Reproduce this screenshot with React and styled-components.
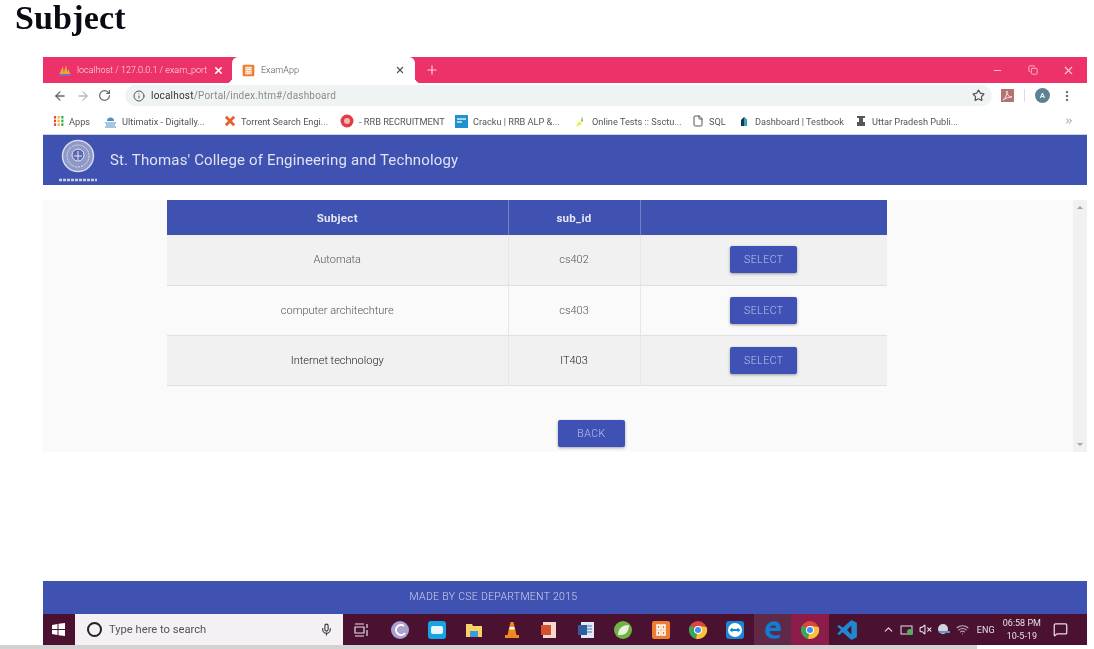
import React from 'react'
import styled, { createGlobalStyle } from 'styled-components'
import {
  ArrowLeft, ArrowRight, RotateCw, Info, Star, MoreVertical, X, Plus, Minus, Copy, File,
  Mic, ChevronUp, VolumeX, Wifi, MessageSquare, ChevronsRight,
} from 'lucide-react'

const subjects = [
  { name: 'Automata', id: 'cs402', dark: false },
  { name: 'computer architechture', id: 'cs403', dark: false },
  { name: 'Internet technology', id: 'IT403', dark: true },
]

const ChromeLogo = () => (
  <svg width="20" height="20" viewBox="0 0 20 20">
    <circle cx="10" cy="10" r="9" fill="#d9483b" />
    <path d="M10 10 L2.2 5.5 A9 9 0 0 0 8 18.8 Z" fill="#3aa757" />
    <path d="M10 10 L8 18.8 A9 9 0 0 0 18.6 7 L10 6 Z" fill="#f5c33b" />
    <circle cx="10" cy="10" r="4" fill="#fff" />
    <circle cx="10" cy="10" r="3" fill="#4a8af4" />
  </svg>
)

const XamppLogo = ({ size = 20 }) => (
  <svg width={size} height={size} viewBox="0 0 20 20">
    <rect x="1" y="1" width="18" height="18" rx="2" fill="#ee7d31" />
    <path d="M6 5h3v4H6zM11 5h3v4h-3zM6 11h3v4H6zM11 11h3v4h-3z" fill="none" stroke="#fff" strokeWidth="1.6" />
  </svg>
)

const taskIcons = [
  <svg width="20" height="20" viewBox="0 0 20 20" key="torrent">
    <circle cx="10" cy="10" r="9" fill="#a9a1cf" />
    <path d="M14 6a5 5 0 1 0 1 7" fill="none" stroke="#fff" strokeWidth="2" />
  </svg>,
  <svg width="20" height="20" viewBox="0 0 20 20" key="zoom">
    <rect x="1" y="1" width="18" height="18" rx="3" fill="#17a4e4" />
    <rect x="4" y="6" width="12" height="8" rx="2" fill="#eaf6fd" />
  </svg>,
  <svg width="20" height="20" viewBox="0 0 20 20" key="folder">
    <path d="M2 4h6l1 2h9v11H2z" fill="#f6d268" />
    <rect x="6" y="11" width="8" height="6" fill="#3f9bd8" />
  </svg>,
  <svg width="20" height="20" viewBox="0 0 20 20" key="vlc">
    <path d="M8.5 2h3l3 13h-9z" fill="#f08a1d" />
    <path d="M7.7 7h4.6l.5 2.5H7.200z" fill="#fff" />
    <rect x="3" y="15" width="14" height="3" fill="#f08a1d" />
  </svg>,
  <svg width="20" height="20" viewBox="0 0 20 20" key="office">
    <rect x="4" y="2" width="13" height="16" fill="#f3d9cf" />
    <rect x="2" y="5" width="10" height="10" fill="#d4512e" />
  </svg>,
  <svg width="20" height="20" viewBox="0 0 20 20" key="word">
    <rect x="5" y="2" width="13" height="16" fill="#dfe8f3" />
    <path d="M8 6h8M8 9h8M8 12h8" stroke="#4a76ad" strokeWidth="1" />
    <rect x="2" y="5" width="9" height="10" fill="#2f5e9e" />
  </svg>,
  <svg width="20" height="20" viewBox="0 0 20 20" key="spring">
    <circle cx="10" cy="10" r="9" fill="#6fb346" />
    <path d="M5 15C5 8 10 5 16 5c0 6-3 10-8 10-1 0-2 0-3 0z" fill="#e9f3dc" />
  </svg>,
  <XamppLogo key="xampp" />,
  <ChromeLogo key="chrome" />,
  <svg width="20" height="20" viewBox="0 0 20 20" key="teamviewer">
    <rect x="1" y="1" width="18" height="18" rx="3" fill="#1b86d6" />
    <circle cx="10" cy="10" r="7" fill="#fff" />
    <path d="M4.500 10l3-2.500v1.500h5V7.500l3 2.500-3 2.500V11h-5v1.500z" fill="#1b86d6" />
  </svg>,
  <svg width="22" height="22" viewBox="0 0 20 20" key="edge">
    <path d="M3 11C3 5 7 2 11 2c4 0 6 3 6 7v2H7c0 4 5 5 9 3v3c-5 2-13 1-13-6zM7 8h6c0-3-5-3-6 0z" fill="#0f7dd4" />
  </svg>,
  <ChromeLogo key="chrome2" />,
  <svg width="22" height="22" viewBox="0 0 20 20" key="vscode">
    <path d="M14 1l5 2.500v13L14 19 6 12l-3 2.500-2-1L4.500 10 1 6.500l2-1L6 8z" fill="#1f88d0" />
    <path d="M14 6l-4 4 4 4z" fill="#4a1030" />
  </svg>,
]

function App() {
  return (
    <>
      <GlobalStyle />
      <Title>Subject</Title>
      <Window>
        <TabStrip>
          <InactiveTab>
            <svg width="14" height="14" viewBox="0 0 14 14">
              <path d="M1 12L5 3l1 9zM5 12L8 2l2 10zM9 12l1-6 3 6z" fill="#f0a33c" />
              <rect x="1" y="11" width="12" height="2" fill="#7a6fb0" />
            </svg>
            <TabLabel $light>localhost / 127.0.0.1 / exam_port</TabLabel>
            <X size={11} strokeWidth={3.5} color="#fff" />
          </InactiveTab>
          <ActiveTab>
            <XamppLogo size={13} />
            <TabLabel>ExamApp</TabLabel>
            <X size={10} strokeWidth={3} color="#555" />
          </ActiveTab>
          <NewTab><Plus size={14} strokeWidth={2} color="#fbd5e0" /></NewTab>
          <WindowControls>
            <Minus size={11} color="#f9c9d7" />
            <Copy size={10} color="#f9c9d7" />
            <X size={13} color="#f9c9d7" />
          </WindowControls>
        </TabStrip>

        <Toolbar>
          <NavIcons>
            <ArrowLeft size={14} color="#666" strokeWidth={2.2} />
            <ArrowRight size={14} color="#bbb" strokeWidth={2.2} />
            <RotateCw size={13} color="#666" strokeWidth={2.2} />
          </NavIcons>
          <AddressBar>
            <Info size={12} color="#555" />
            <Url><b>localhost</b>/Portal/index.htm#/dashboard</Url>
            <Star size={13} color="#555" strokeWidth={2.2} />
          </AddressBar>
          <ToolbarEnd>
            <PdfBadge>
              <svg width="13" height="13" viewBox="0 0 13 13"><path d="M2 11c3-2 4-6 4-9 0 4 2 6 5 6-3 0-6 1-9 3z" fill="none" stroke="#f3e4e4" strokeWidth="1" /></svg>
            </PdfBadge>
            <Divider />
            <Avatar>A</Avatar>
            <MoreVertical size={14} color="#777" strokeWidth={2.4} />
          </ToolbarEnd>
        </Toolbar>

        <Bookmarks>
          <Bookmark $w={51}>
            <svg width="11" height="11" viewBox="0 0 12 12">
              {[0, 1, 2].flatMap((r) => [0, 1, 2].map((c) => (
                <rect key={`${r}${c}`} x={1 + c * 4} y={r * 4} width="2.400" height="2.800"
                  fill={['#e0483e', '#f2b632', '#3aa757'][c]} />
              )))}
            </svg>
            Apps
          </Bookmark>
          <Bookmark $w={120}>
            <svg width="13" height="13" viewBox="0 0 13 13">
              <path d="M3 6a3.500 3.500 0 0 1 7 0z" fill="#4f8fc2" />
              <path d="M1 8h11M2 10h9M1 12h11" stroke="#4f8fc2" strokeWidth="1" />
            </svg>
            Ultimatix - Digitally...
          </Bookmark>
          <Bookmark $w={116}>
            <svg width="12" height="12" viewBox="0 0 13 13">
              <path d="M2 2l9 9M11 2l-9 9" stroke="#e2622a" strokeWidth="3" />
            </svg>
            Torrent Search Engi...
          </Bookmark>
          <Bookmark $w={115}>
            <svg width="14" height="14" viewBox="0 0 14 14">
              <circle cx="7" cy="7" r="6.500" fill="#df3e46" />
              <circle cx="7" cy="7" r="3" fill="#f5b6b6" />
            </svg>
            - RRB RECRUITMENT
          </Bookmark>
          <Bookmark $w={119}>
            <svg width="13" height="13" viewBox="0 0 13 13">
              <rect width="13" height="13" fill="#1f93d2" />
              <path d="M2 4h9M2 7h5" stroke="#d8eef8" strokeWidth="1.600" />
            </svg>
            Cracku | RRB ALP &...
          </Bookmark>
          <Bookmark $w={118}>
            <svg width="13" height="13" viewBox="0 0 13 13">
              <path d="M2 12l3-6 3 3z" fill="#ecec4a" />
              <path d="M8 1l1 5-2 1z" fill="#7bb043" />
            </svg>
            Online Tests :: Ssctu...
          </Bookmark>
          <Bookmark $w={46}>
            <File size={12} color="#555" />
            SQL
          </Bookmark>
          <Bookmark $w={117}>
            <svg width="12" height="12" viewBox="0 0 12 12">
              <path d="M3 11V5l3-3 3 3v6z" fill="#123a4a" />
              <path d="M6 2l3 3v6H6z" fill="#2aa6b8" />
            </svg>
            Dashboard | Testbook
          </Bookmark>
          <Bookmark $w={200}>
            <svg width="12" height="12" viewBox="0 0 12 12">
              <path d="M2 1h8v2H8v4h2v4H2V7h2V3H2z" fill="#55585a" />
            </svg>
            Uttar Pradesh Publi...
          </Bookmark>
          <More><ChevronsRight size={10} color="#777" /></More>
        </Bookmarks>

        <AppHeader>
          <svg width="40" height="48" viewBox="0 0 40 48">
            <circle cx="20" cy="19" r="15.500" fill="#8e99c8" stroke="#d5d9ea" strokeWidth="1.500" />
            <circle cx="20" cy="19" r="11" fill="none" stroke="#dfe2f0" strokeWidth="1" strokeDasharray="2 1" />
            <circle cx="20" cy="18" r="6" fill="#5c69ae" stroke="#e4e7f3" strokeWidth="1" />
            <path d="M16 19h8M20 14v9" stroke="#e4e7f3" strokeWidth="1" />
            <path d="M1 43h38" stroke="#c9cee4" strokeWidth="2.500" strokeDasharray="3 1" />
          </svg>
          <College>St. Thomas' College of Engineering and Technology</College>
        </AppHeader>

        <Content>
          <Main>
            <Table>
              <colgroup>
                <col width="341" />
                <col width="132" />
                <col width="247" />
              </colgroup>
              <thead>
                <tr>
                  <Th>Subject</Th>
                  <Th>sub_id</Th>
                  <Th />
                </tr>
              </thead>
              <tbody>
                {subjects.map((s, i) => (
                  <Row key={s.id} $odd={i % 2 === 0}>
                    <Td $dark={s.dark}>{s.name}</Td>
                    <Td $dark={s.dark}>{s.id}</Td>
                    <Td><Button>SELECT</Button></Td>
                  </Row>
                ))}
              </tbody>
            </Table>
            <BackRow><Button>BACK</Button></BackRow>
          </Main>
          <Scrollbar>
            <Arrow $up />
            <Arrow />
          </Scrollbar>
        </Content>

        <Spacer />

        <Footer>MADE BY CSE DEPARTMENT 2015</Footer>

        <Taskbar>
          <StartButton>
            <svg width="13" height="13" viewBox="0 0 13 13">
              <path d="M0 2l5.500-1v5H0zM6.500.8L13 0v6H6.500zM0 7h5.500v5L0 11zM6.500 7H13v6l-6.500-.8z" fill="#fff" />
            </svg>
          </StartButton>
          <SearchBox>
            <SearchRing />
            <SearchText>Type here to search</SearchText>
            <Mic size={13} color="#333" />
          </SearchBox>
          <TaskView>
            <svg width="16" height="14" viewBox="0 0 16 14">
              <path d="M1 1h9M1 13h9M1 4h9v6H1zM13 1v4M13 7v6" fill="none" stroke="#e6e0e4" strokeWidth="1.200" />
            </svg>
          </TaskView>
          {taskIcons.map((icon, i) => (
            <TaskSlot key={i} $state={i === 10 ? 'hover' : i === 11 ? 'active' : undefined}>{icon}</TaskSlot>
          ))}
          <Tray>
            <ChevronUp size={13} color="#e6e0e4" />
            <svg width="14" height="12" viewBox="0 0 14 12">
              <rect x="1" y="2" width="11" height="8" fill="none" stroke="#e6e0e4" />
              <circle cx="10" cy="8" r="3" fill="#4fb060" />
            </svg>
            <VolumeX size={13} color="#e6e0e4" />
            <svg width="14" height="13" viewBox="0 0 14 13">
              <circle cx="6" cy="6" r="5" fill="#cfd4e2" />
              <path d="M2 9h11" stroke="#6f8fc0" strokeWidth="2" />
            </svg>
            <Wifi size={13} color="#bfb6bc" />
            <TrayText>ENG</TrayText>
            <Clock>
              <span>06:58 PM</span>
              <span>10-5-19</span>
            </Clock>
            <MessageSquare size={15} color="#e6e0e4" />
          </Tray>
        </Taskbar>
      </Window>
      <PageScroll />
    </>
  )
}

const GlobalStyle = createGlobalStyle`
  html, body {
    margin: 0;
    padding: 0;
    background: #fff;
    overflow: hidden;
  }
  body {
    width: 1094px;
    height: 649px;
    font-family: Roboto, "Liberation Sans", sans-serif;
    filter: blur(0.45px);
  }
`

const Title = styled.h1`
  height: 57px;
  margin: 0;
  padding: 1px 0 0 15px;
  box-sizing: border-box;
  font: bold 34px/33px "Liberation Serif", serif;
  letter-spacing: 0.15px;
  color: #0a0a14;
`

const Window = styled.div`
  width: 1044px;
  height: 588px;
  margin-left: 43px;
  display: flex;
  flex-direction: column;
`

const TabStrip = styled.div`
  height: 26px;
  flex: none;
  display: flex;
  background: #ec3269;
`

const InactiveTab = styled.div`
  width: 189px;
  box-sizing: border-box;
  padding: 0 8px 0 15px;
  display: flex;
  align-items: center;
  gap: 5px;
`

const ActiveTab = styled.div`
  position: relative;
  width: 183px;
  box-sizing: border-box;
  padding: 0 10px 0 10px;
  display: flex;
  align-items: center;
  gap: 6px;
  background: #fff;
  border-radius: 6px 6px 0 0;
  &::before, &::after {
    content: '';
    position: absolute;
    bottom: 0;
    width: 6px;
    height: 6px;
  }
  &::before {
    left: -6px;
    background: radial-gradient(circle at 0 0, #ec3269 6px, #fff 6.500px);
  }
  &::after {
    right: -6px;
    background: radial-gradient(circle at 100% 0, #ec3269 6px, #fff 6.500px);
  }
`

const TabLabel = styled.span`
  flex: 1;
  font-size: 9px;
  font-weight: 300;
  white-space: nowrap;
  color: ${(p) => (p.$light ? '#fbdfe7' : '#555')};
`

const NewTab = styled.div`
  width: 34px;
  display: flex;
  align-items: center;
  justify-content: center;
`

const WindowControls = styled.div`
  margin-left: auto;
  width: 95px;
  padding-right: 12px;
  box-sizing: border-box;
  display: flex;
  align-items: center;
  justify-content: space-between;
`

const Toolbar = styled.div`
  height: 25px;
  flex: none;
  display: flex;
  align-items: center;
  background: #fff;
`

const NavIcons = styled.div`
  width: 82px;
  box-sizing: border-box;
  padding: 0 14px 0 10px;
  display: flex;
  align-items: center;
  justify-content: space-between;
`

const AddressBar = styled.div`
  width: 867px;
  height: 21px;
  box-sizing: border-box;
  padding: 0 7px 0 8px;
  display: flex;
  align-items: center;
  gap: 6px;
  border-radius: 11px;
  background: #f0f3f4;
`

const Url = styled.span`
  flex: 1;
  font-size: 10px;
  letter-spacing: 0.2px;
  color: #8a8a8a;
  b {
    font-weight: 400;
    color: #333;
  }
`

const ToolbarEnd = styled.div`
  flex: 1;
  display: flex;
  align-items: center;
  padding-left: 9px;
  gap: 10px;
`

const PdfBadge = styled.div`
  width: 13px;
  height: 13px;
  display: flex;
  background: #b5736f;
`

const Divider = styled.div`
  width: 1px;
  height: 13px;
  background: #ddd;
`

const Avatar = styled.div`
  width: 15px;
  height: 15px;
  border-radius: 50%;
  background: #5d8296;
  color: #e6eef2;
  font-size: 8px;
  font-weight: 700;
  line-height: 15px;
  text-align: center;
`

const Bookmarks = styled.div`
  height: 27px;
  flex: none;
  box-sizing: border-box;
  padding-left: 10px;
  display: flex;
  align-items: center;
  background: #fff;
  border-bottom: 1px solid #cfd3e0;
`

const Bookmark = styled.div`
  width: ${(p) => p.$w}px;
  flex: none;
  display: flex;
  align-items: center;
  gap: 5px;
  font-size: 9.200px;
  white-space: nowrap;
  color: #555;
`

const More = styled.div`
  margin-left: auto;
  padding-right: 13px;
  display: flex;
`

const AppHeader = styled.header`
  height: 50px;
  flex: none;
  box-sizing: border-box;
  padding: 2px 0 0 15px;
  display: flex;
  align-items: center;
  gap: 12px;
  background: #3f51b1;
`

const College = styled.div`
  margin-bottom: 2px;
  font-size: 15px;
  letter-spacing: 0.15px;
  color: #dfe3f2;
`

const Content = styled.div`
  height: 252px;
  margin-top: 15px;
  flex: none;
  display: flex;
  background: #fafafa;
`

const Main = styled.div`
  flex: 1;
  padding-left: 124px;
`

const Table = styled.table`
  width: 720px;
  table-layout: fixed;
  border-collapse: collapse;
  font-size: 11px;
  font-weight: 300;
`

const Th = styled.th`
  height: 35px;
  padding: 0;
  box-sizing: border-box;
  background: #3f51b1;
  border-left: 1px solid #7280c4;
  color: #e4e7f4;
  font-size: 11.500px;
  font-weight: 700;
  letter-spacing: 0.3px;
  &:first-child {
    border-left: 0;
  }
`

const Row = styled.tr`
  background: ${(p) => (p.$odd ? '#f1f1f1' : '#fafafa')};
`

const Td = styled.td`
  height: 50px;
  padding: 0;
  box-sizing: border-box;
  text-align: center;
  border-left: 1px solid #e6e6e6;
  border-bottom: 1px solid #e0e0e0;
  color: ${(p) => (p.$dark ? '#222' : '#555')};
  &:first-child {
    border-left: 0;
  }
`

const Button = styled.button`
  width: 67px;
  height: 27px;
  padding: 0;
  border: 0;
  border-radius: 2px;
  background: #3f51b5;
  color: #bcc4e6;
  font-family: Roboto, sans-serif;
  font-size: 10.500px;
  font-weight: 300;
  letter-spacing: 0.5px;
  box-shadow: 0 1px 3px rgba(0, 0, 0, 0.35);
`

const BackRow = styled.div`
  padding: 34px 0 0 391px;
`

const Scrollbar = styled.div`
  width: 14px;
  flex: none;
  box-sizing: border-box;
  padding: 6px 0;
  display: flex;
  flex-direction: column;
  justify-content: space-between;
  align-items: center;
  background: #f1f1f1;
`

const Arrow = styled.div`
  width: 0;
  height: 0;
  border-left: 3px solid transparent;
  border-right: 3px solid transparent;
  border-${(p) => (p.$up ? 'bottom' : 'top')}: 3px solid #a3a3a3;
`

const Spacer = styled.div`
  flex: 1;
`

const Footer = styled.footer`
  height: 33px;
  flex: none;
  box-sizing: border-box;
  padding: 0 143px 3px 0;
  display: flex;
  align-items: center;
  justify-content: center;
  background: #3f51b1;
  color: #cdd2ea;
  font-size: 10.500px;
  font-weight: 300;
  letter-spacing: 0.3px;
`

const Taskbar = styled.div`
  height: 31px;
  flex: none;
  display: flex;
  align-items: center;
  background: #4b1131;
`

const StartButton = styled.div`
  width: 32px;
  height: 100%;
  padding-right: 2px;
  box-sizing: border-box;
  display: flex;
  align-items: center;
  justify-content: center;
`

const SearchBox = styled.div`
  width: 268px;
  height: 100%;
  box-sizing: border-box;
  padding: 0 10px 0 12px;
  display: flex;
  align-items: center;
  gap: 7px;
  background: #f4f0f4;
`

const SearchRing = styled.div`
  width: 11px;
  height: 11px;
  border: 2px solid #222;
  border-radius: 50%;
`

const SearchText = styled.span`
  flex: 1;
  font-size: 11.200px;
  color: #555;
`

const TaskView = styled.div`
  width: 38px;
  height: 100%;
  display: flex;
  align-items: center;
  justify-content: center;
`

const TaskSlot = styled.div`
  width: 37.300px;
  height: 100%;
  flex: none;
  display: flex;
  align-items: center;
  justify-content: center;
  background: ${(p) => (p.$state === 'active' ? '#8c1d4a' : p.$state === 'hover' ? '#5e2a48' : 'transparent')};
`

const Tray = styled.div`
  flex: 1;
  padding-left: 16px;
  display: flex;
  align-items: center;
  gap: 5px;
`

const TrayText = styled.span`
  margin-left: 3px;
  width: 18px;
  font-size: 9px;
  color: #e6e0e4;
`

const Clock = styled.div`
  width: 38px;
  margin: 0 7px 0 3px;
  display: flex;
  flex-direction: column;
  align-items: center;
  gap: 3px;
  font-size: 9px;
  white-space: nowrap;
  color: #e6e0e4;
`

const PageScroll = styled.div`
  width: 977px;
  height: 4px;
  background: #d2d2d2;
`

export default App
